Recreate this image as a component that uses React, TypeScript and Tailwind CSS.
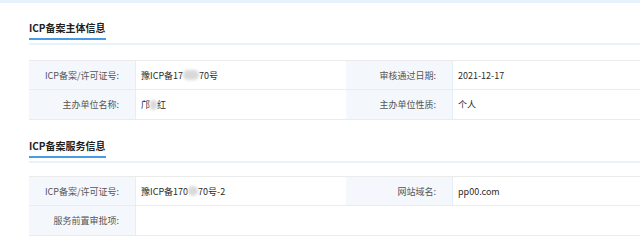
import type { ReactNode } from "react";

const font = { fontFamily: '"Noto Sans CJK SC", "Noto Sans", sans-serif' };

function Mask({ w }: { w: number }) {
  return (
    <span
      className="inline-block h-[10px] rounded-full bg-[#d9d9d9] align-middle blur-[1.5px]"
      style={{ width: w }}
    />
  );
}

function Title({ children }: { children: ReactNode }) {
  return (
    <div className="flex flex-col items-stretch">
      <div className="self-start border-b-2 border-[#4a9be6] pb-[3px] text-[10px] leading-[14px] font-bold text-[#222]">
        {children}
      </div>
      <div className="mt-[3px] h-[2px] bg-[#e6f3fa]" />
    </div>
  );
}

function Label({ children, last }: { children: ReactNode; last?: boolean }) {
  return (
    <div
      className={`flex h-[29px] items-center justify-end border-r border-[#e4eef7] bg-[#f4f8fc] pr-[16px] text-[9px] text-[#555] ${
        last ? "" : "border-b"
      }`}
    >
      {children}
    </div>
  );
}

function Value({ children, last, span }: { children?: ReactNode; last?: boolean; span?: boolean }) {
  return (
    <div
      className={`flex h-[29px] items-center pl-[5px] text-[9px] text-[#2b2b2b] ${last ? "" : "border-b border-[#e4eef7]"} ${
        span ? "col-span-3" : ""
      }`}
    >
      {children}
    </div>
  );
}

export default function App() {
  return (
    <div className="h-[247px] w-[640px] overflow-hidden bg-white leading-none" style={font}>
      <div className="h-[3px] bg-[#e5f2fb]" />
      <div className="w-[760px] pl-[29px]">
        <div className="pt-[18px]">
          <Title>ICP备案主体信息</Title>
        </div>
        <div className="mt-[15px] grid grid-cols-[107px_210px_107px_1fr] border-y border-[#ebebeb]">
          <Label>ICP备案/许可证号:</Label>
          <Value>
            豫ICP备17
            <Mask w={16} />
            70号
          </Value>
          <Label>审核通过日期:</Label>
          <Value>2021-12-17</Value>
          <Label last>主办单位名称:</Label>
          <Value last>
            邝
            <Mask w={7} />红
          </Value>
          <Label last>主办单位性质:</Label>
          <Value last>个人</Value>
        </div>

        <div className="mt-[19px]">
          <Title>ICP备案服务信息</Title>
        </div>
        <div className="mt-[13px] grid grid-cols-[107px_210px_107px_1fr] border-y border-[#ebebeb]">
          <Label>ICP备案/许可证号:</Label>
          <Value>
            豫ICP备170
            <Mask w={10} />
            70号-2
          </Value>
          <Label>网站域名:</Label>
          <Value>pp00.com</Value>
          <Label last>服务前置审批项:</Label>
          <Value last span />
        </div>
      </div>
    </div>
  );
}
